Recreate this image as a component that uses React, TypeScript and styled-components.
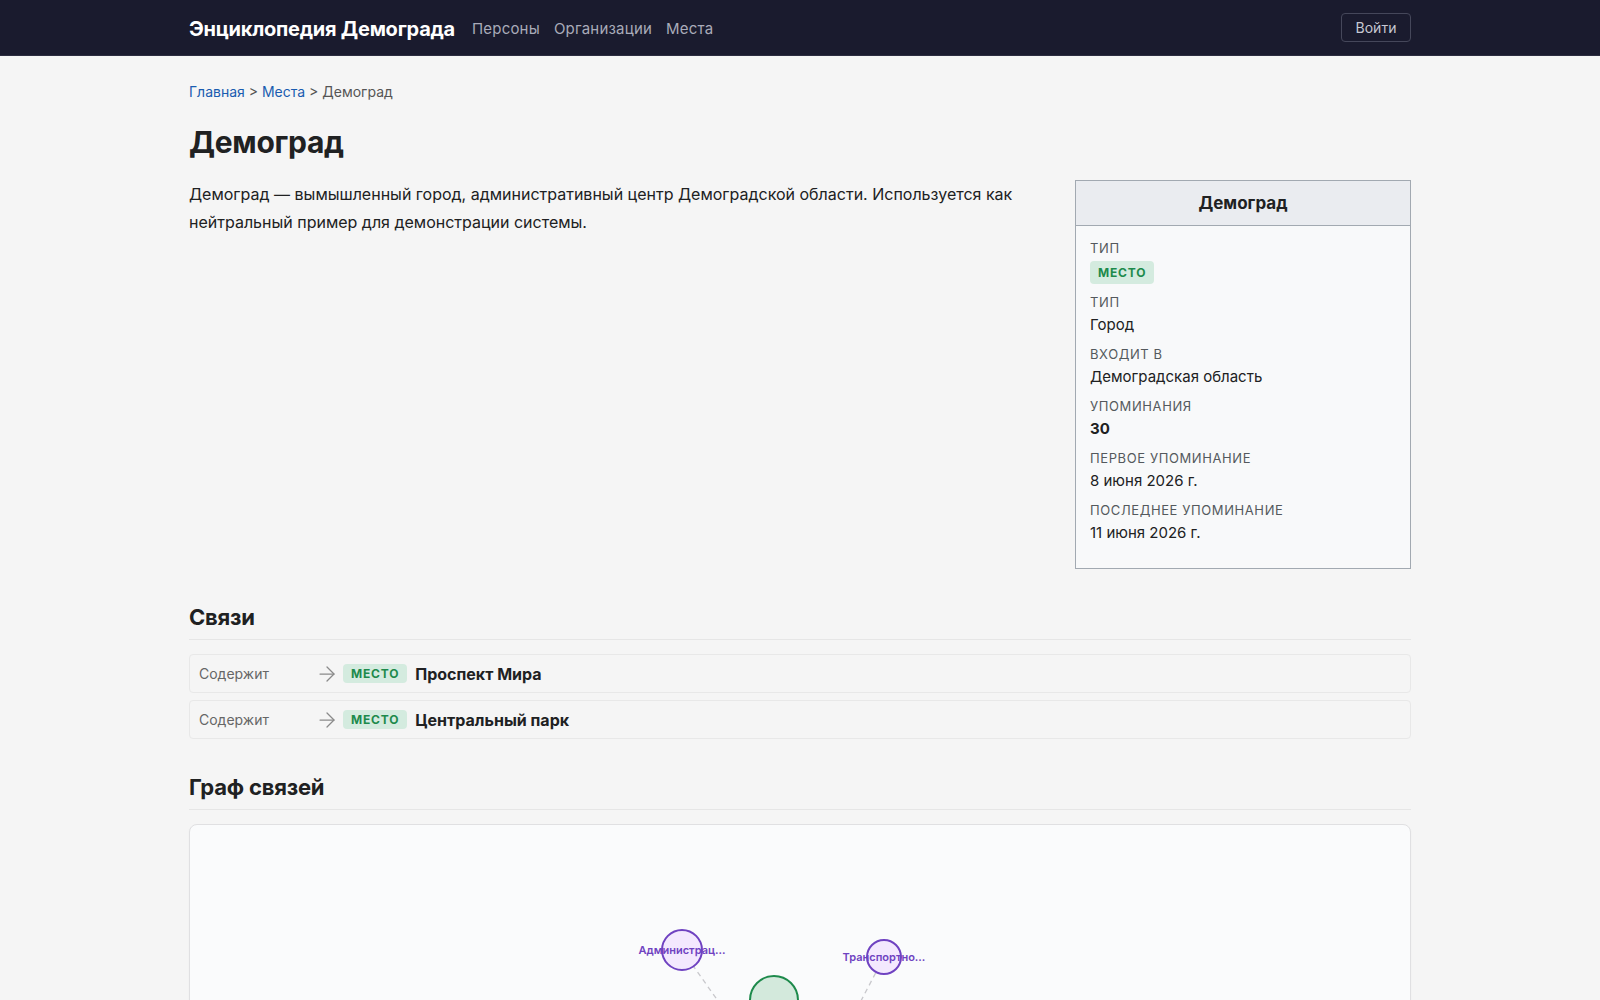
import { createGlobalStyle, styled } from "styled-components";
import { ArrowRight } from "lucide-react";

const GlobalStyle = createGlobalStyle`
    body {
        margin: 0;
        background: #f5f5f5;
        color: #202122;
        font-family: Inter, "Noto Sans", "Liberation Sans", sans-serif;
    }
`

const NavBar = styled.header`
    height: 56px;
    padding-top: 2px;
    background: #1a1b2e;
    border-bottom: 1px solid #2c2d40;
    box-sizing: border-box;
`

const NavInner = styled.div`
    max-width: 1222px;
    height: 100%;
    margin: 0 auto;
    display: flex;
    align-items: center;
`

const Brand = styled.a`
    font-size: 20px;
    font-weight: 700;
    color: #ffffff;
    text-decoration: none;
    margin-right: 17px;
    letter-spacing: -0.25px;
`

const NavLinks = styled.nav`
    display: flex;
    gap: 14px;
    flex: 1;
`

const NavLink = styled.a`
    font-size: 15px;
    letter-spacing: 0.2px;
    color: #a9abb9;
    text-decoration: none;
`

const LoginButton = styled.button`
    height: 29px;
    width: 70px;
    margin-top: -2px;
    background: transparent;
    border: 1px solid #45475a;
    border-radius: 4px;
    color: #c6c8d2;
    font-family: inherit;
    font-size: 14px;
`

const Main = styled.main`
    max-width: 1222px;
    margin: 0 auto;
    padding: 26px 0 60px;
`

const Breadcrumbs = styled.div`
    font-size: 14px;
    line-height: 20px;
    color: #555;
    margin-bottom: 22px;

    a {
        color: #1a5cb0;
        text-decoration: none;
    }
`

const Title = styled.h1`
    font-size: 30px;
    line-height: 36px;
    font-weight: 700;
    margin: 0 0 20px;
    letter-spacing: -0.3px;
`

const ContentRow = styled.div`
    display: flex;
    align-items: flex-start;
    gap: 24px;
`

const Lead = styled.p`
    flex: 1;
    margin: 0;
    font-size: 16px;
    line-height: 28px;
`

const Infobox = styled.aside`
    width: 336px;
    flex-shrink: 0;
    box-sizing: border-box;
    border: 1px solid #a2a9b1;
    background: #f8f9fa;
`

const InfoboxTitle = styled.div`
    padding: 11px 14px;
    font-size: 17px;
    line-height: 22px;
    font-weight: 700;
    text-align: center;
    background: #eaecf0;
    border-bottom: 1px solid #a2a9b1;
`

const InfoboxBody = styled.dl`
    margin: 0;
    padding: 13px 14px 15px;
`

const Field = styled.div`
    margin-bottom: 9px;
`

const FieldLabel = styled.dt`
    font-size: 13px;
    line-height: 18px;
    letter-spacing: 0.6px;
    text-transform: uppercase;
    color: #54595d;
`

const FieldValue = styled.dd<{ $bold?: boolean }>`
    margin: 3px 0 0;
    font-size: 15px;
    line-height: 22px;
    font-weight: ${p => (p.$bold ? 700 : 400)};
`

const TypeBadge = styled.span<{ $size?: "sm" | "md" }>`
    display: inline-block;
    padding: ${p => (p.$size === "sm" ? "2px 8px" : "4px 8px")};
    margin-top: ${p => (p.$size === "sm" ? "0" : "1px")};
    font-size: 12px;
    line-height: 15px;
    font-weight: 700;
    letter-spacing: 0.8px;
    text-transform: uppercase;
    color: #1e8a4c;
    background: #d4ebdf;
    border-radius: 4px;
`

const Section = styled.section`
    margin-top: 34px;
`

const SectionTitle = styled.h2`
    font-size: 22px;
    line-height: 28px;
    font-weight: 700;
    margin: 0 0 14px;
    padding-bottom: 8px;
    border-bottom: 1px solid #e6e6e6;
    letter-spacing: -0.2px;
`

const RelationList = styled.div`
    display: flex;
    flex-direction: column;
    gap: 7px;
`

const RelationRow = styled.div`
    display: flex;
    align-items: center;
    height: 39px;
    box-sizing: border-box;
    padding: 0 9px;
    border: 1px solid #e8e8e8;
    border-radius: 4px;
    background: #f5f5f5;
`

const RelationKind = styled.span`
    width: 116px;
    font-size: 14px;
    color: #666;
`

const RelationArrow = styled.span`
    display: flex;
    color: #8a8a8a;
    margin-right: 4px;
`

const RelationTarget = styled.a`
    margin-left: 8px;
    font-size: 16px;
    font-weight: 700;
    color: #202122;
    text-decoration: none;
`

const GraphCard = styled.div`
    height: 520px;
    border: 1px solid #e0e0e2;
    border-radius: 8px;
    background: #fafbfc;
    box-shadow: 0 1px 2px rgba(0, 0, 0, 0.04);
    overflow: hidden;

    svg {
        display: block;
    }
`

type GraphNode = { id: string; x: number; y: number; r: number; label: string; kind: "place" | "org" };

const nodes: GraphNode[] = [
    { id: "admin", x: 492, y: 125, r: 20, label: "Администрац…", kind: "org" },
    { id: "transport", x: 694, y: 132, r: 17, label: "Транспортно…", kind: "org" },
    { id: "self", x: 584, y: 175, r: 24, label: "Демоград", kind: "place" },
    { id: "region", x: 610, y: 292, r: 26, label: "Демоградская…", kind: "place" },
    { id: "avenue", x: 470, y: 330, r: 18, label: "Проспект Мира", kind: "place" },
    { id: "park", x: 735, y: 345, r: 18, label: "Центральный…", kind: "place" },
];

const edges: [string, string][] = [
    ["admin", "region"],
    ["transport", "region"],
    ["self", "avenue"],
    ["self", "park"],
];

const palette = {
    place: { fill: "#d3e9dc", stroke: "#1e8a4c", text: "#1e6e40" },
    org: { fill: "#f3e8fe", stroke: "#6f42c1", text: "#6f42c1" },
};

const RelationGraph = () => {
    const byId = (id: string) => nodes.find(n => n.id === id)!;
    return (
        <svg width="100%" height="520">
            {edges.map(([a, b]) => {
                const from = byId(a);
                const to = byId(b);
                return (
                    <line key={a + b} x1={from.x} y1={from.y} x2={to.x} y2={to.y}
                        stroke="#c8c8cc" strokeWidth={1.3} strokeDasharray="5 4" />
                );
            })}
            {nodes.map(n => (
                <g key={n.id}>
                    <circle cx={n.x} cy={n.y} r={n.r} fill={palette[n.kind].fill}
                        stroke={palette[n.kind].stroke} strokeWidth={2} />
                    {n.id !== "self" && (
                        <text x={n.x} y={n.y} dy="0.35em" textAnchor="middle" fontSize={11}
                            fontWeight={600} fill={palette[n.kind].text}
                            fontFamily="Inter, 'Noto Sans', sans-serif">
                            {n.label}
                        </text>
                    )}
                </g>
            ))}
        </svg>
    );
};

const relations = [
    { kind: "Содержит", target: "Проспект Мира" },
    { kind: "Содержит", target: "Центральный парк" },
];

const infoFields = [
    { label: "Тип", value: "Город" },
    { label: "Входит в", value: "Демоградская область" },
    { label: "Упоминания", value: "30", bold: true },
    { label: "Первое упоминание", value: "8 июня 2026 г." },
    { label: "Последнее упоминание", value: "11 июня 2026 г." },
];

const App = () => {
    return (
        <>
            <GlobalStyle />
            <NavBar>
                <NavInner>
                    <Brand href="#">Энциклопедия Демограда</Brand>
                    <NavLinks>
                        <NavLink href="#">Персоны</NavLink>
                        <NavLink href="#">Организации</NavLink>
                        <NavLink href="#">Места</NavLink>
                    </NavLinks>
                    <LoginButton>Войти</LoginButton>
                </NavInner>
            </NavBar>

            <Main>
                <Breadcrumbs>
                    <a href="#">Главная</a> &gt; <a href="#">Места</a> &gt; Демоград
                </Breadcrumbs>
                <Title>Демоград</Title>

                <ContentRow>
                    <Lead>
                        Демоград — вымышленный город, административный центр Демоградской области. Используется как
                        нейтральный пример для демонстрации системы.
                    </Lead>
                    <Infobox>
                        <InfoboxTitle>Демоград</InfoboxTitle>
                        <InfoboxBody>
                            <Field>
                                <FieldLabel>Тип</FieldLabel>
                                <FieldValue><TypeBadge>Место</TypeBadge></FieldValue>
                            </Field>
                            {infoFields.map(f => (
                                <Field key={f.label}>
                                    <FieldLabel>{f.label}</FieldLabel>
                                    <FieldValue $bold={f.bold}>{f.value}</FieldValue>
                                </Field>
                            ))}
                        </InfoboxBody>
                    </Infobox>
                </ContentRow>

                <Section>
                    <SectionTitle>Связи</SectionTitle>
                    <RelationList>
                        {relations.map(r => (
                            <RelationRow key={r.target}>
                                <RelationKind>{r.kind}</RelationKind>
                                <RelationArrow><ArrowRight size={24} strokeWidth={1.25} /></RelationArrow>
                                <TypeBadge $size="sm">Место</TypeBadge>
                                <RelationTarget href="#">{r.target}</RelationTarget>
                            </RelationRow>
                        ))}
                    </RelationList>
                </Section>

                <Section>
                    <SectionTitle>Граф связей</SectionTitle>
                    <GraphCard>
                        <RelationGraph />
                    </GraphCard>
                </Section>
            </Main>
        </>
    );
};

export default App;
